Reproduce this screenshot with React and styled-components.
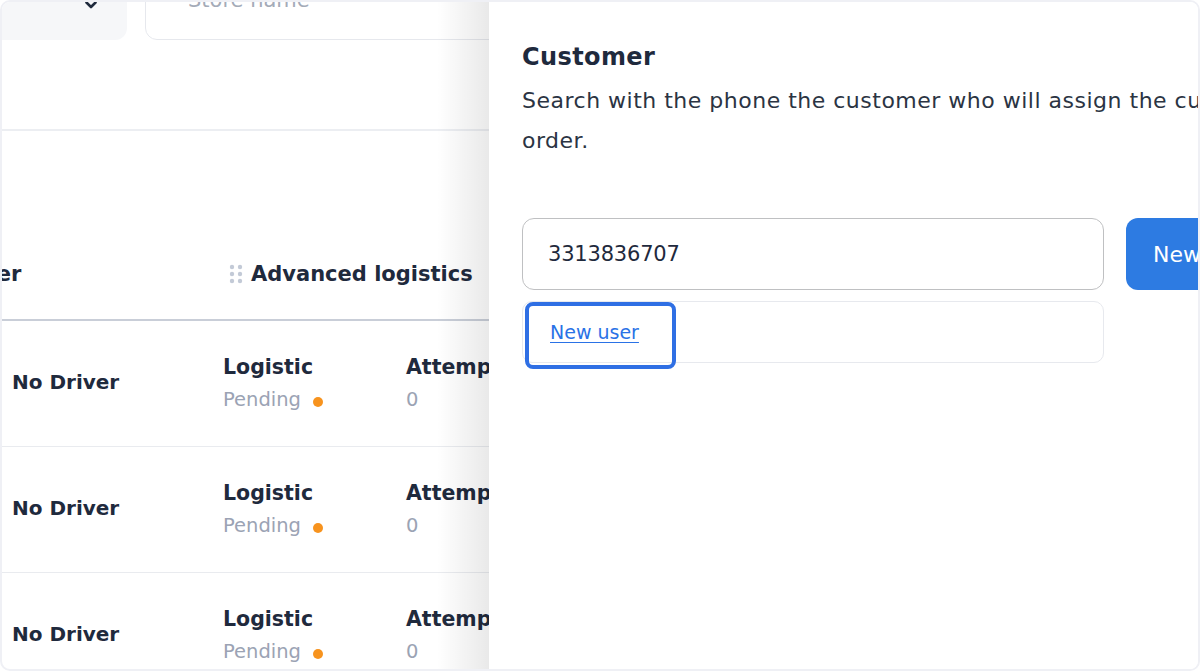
import React from "react";
import styled, { createGlobalStyle } from "styled-components";

const GlobalStyle = createGlobalStyle`
  html, body {
    margin: 0;
    padding: 0;
    background: #ffffff;
    overflow: hidden;
  }
  * {
    box-sizing: border-box;
  }
  body {
    font-family: "DejaVu Sans", "Noto Sans", sans-serif;
    color: #1f2a3d;
  }
`;

const rows = [
  { driver: "No Driver", status: "Pending", attempts: 0 },
  { driver: "No Driver", status: "Pending", attempts: 0 },
  { driver: "No Driver", status: "Pending", attempts: 0 },
];

const DragDots = () => (
  <svg width="14" height="20" viewBox="0 0 14 20" fill="#c3cad7">
    <circle cx="3" cy="3" r="2.2" />
    <circle cx="11" cy="3" r="2.2" />
    <circle cx="3" cy="10" r="2.2" />
    <circle cx="11" cy="10" r="2.2" />
    <circle cx="3" cy="17" r="2.2" />
    <circle cx="11" cy="17" r="2.2" />
  </svg>
);

const Chevron = () => (
  <svg width="12" height="8" viewBox="0 0 12 8">
    <path d="M1.5 1.5 L6 6 L10.5 1.5" stroke="#1f2a3d" strokeWidth="2.6" fill="none" strokeLinecap="round" strokeLinejoin="round" />
  </svg>
);

const Orders = () => (
  <Page>
    <PageInner>
      <Filters>
        <Select>
          <Chevron />
        </Select>
        <StoreInput>Store name</StoreInput>
      </Filters>
      <Divider />
      <Table>
        <HeadCell pad={46}>
          <DragDots />
          <span>Driver</span>
        </HeadCell>
        <HeadCell pad={6}>
          <DragDots />
          <span>Advanced logistics</span>
        </HeadCell>
        {rows.map((row, i) => (
          <React.Fragment key={i}>
            <DriverCell>{row.driver}</DriverCell>
            <LogisticsCell>
              <Stat>
                <StatTitle>Logistic</StatTitle>
                <StatValue>
                  {row.status}
                  <Dot />
                </StatValue>
              </Stat>
              <Stat>
                <StatTitle>Attempts</StatTitle>
                <StatValue>{row.attempts}</StatValue>
              </Stat>
            </LogisticsCell>
          </React.Fragment>
        ))}
      </Table>
    </PageInner>
  </Page>
);

const CustomerDrawer = () => (
  <Drawer>
    <DrawerBody>
      <Title>Customer</Title>
      <Description>
        Search with the phone the customer who will assign the current order.
      </Description>
      <SearchRow>
        <PhoneField>
          <PhoneInput defaultValue="3313836707" />
          <Suggestions>
            <Suggestion href="#">New user</Suggestion>
          </Suggestions>
        </PhoneField>
        <PrimaryButton>New customer</PrimaryButton>
      </SearchRow>
    </DrawerBody>
  </Drawer>
);

export default function App() {
  return (
    <>
      <GlobalStyle />
      <Frame>
        <Orders />
        <CustomerDrawer />
      </Frame>
    </>
  );
}

const Frame = styled.div`
  width: 1200px;
  height: 671px;
  border: 2px solid #eff0f5;
  border-radius: 10px;
  overflow: hidden;
  display: flex;
  background: #ffffff;
`;

const Page = styled.div`
  position: relative;
  width: 487px;
  flex-shrink: 0;
  overflow: hidden;

  &::after {
    content: "";
    position: absolute;
    top: 0;
    right: 0;
    bottom: 0;
    width: 52px;
    background: linear-gradient(to right, rgba(0, 0, 0, 0), rgba(0, 0, 0, 0.085));
    pointer-events: none;
  }
`;

const PageInner = styled.div`
  width: 900px;
  margin-left: -122px;
`;

const Filters = styled.div`
  display: flex;
  gap: 18px;
  margin-top: -46px;
  height: 84px;
`;

const Select = styled.div`
  width: 247px;
  background: #f6f7f9;
  border-radius: 12px;
  display: flex;
  justify-content: flex-end;
  align-items: flex-start;
  padding: 45px 30px 0 0;
`;

const StoreInput = styled.div`
  flex: 1;
  border: 1.5px solid #e6e8ed;
  border-radius: 12px;
  padding: 28px 0 0 42px;
  font-size: 21px;
  color: #a4abb8;
  line-height: 30px;
`;

const Divider = styled.div`
  height: 2px;
  background: #eceef2;
  margin-top: 89px;
`;

const Table = styled.div`
  display: grid;
  grid-template-columns: 343px 1fr;
  margin-top: 100px;
`;

const HeadCell = styled.div`
  display: flex;
  align-items: center;
  gap: 8px;
  height: 90px;
  padding: 0 0 2px ${(p) => p.pad}px;
  border-bottom: 2px solid #c9ced8;
  font-size: 21px;
  font-weight: 700;
  color: #1f2a3d;
`;

const DriverCell = styled.div`
  height: 126px;
  display: flex;
  align-items: center;
  padding: 0 0 3px 132px;
  border-bottom: 1px solid #e9ebef;
  font-size: 20px;
  font-weight: 700;
  color: #1f2a3d;
`;

const LogisticsCell = styled.div`
  height: 126px;
  display: flex;
  align-items: center;
  border-bottom: 1px solid #e9ebef;
`;

const Stat = styled.div`
  width: 183px;
  display: flex;
  flex-direction: column;
  gap: 5px;
`;

const StatTitle = styled.div`
  font-size: 20.5px;
  font-weight: 700;
  line-height: 28px;
  color: #1f2a3d;
`;

const StatValue = styled.div`
  display: flex;
  align-items: center;
  gap: 12px;
  font-size: 19.5px;
  line-height: 28px;
  color: #9ba3b4;
`;

const Dot = styled.span`
  width: 10px;
  height: 10px;
  border-radius: 50%;
  background: #f7931e;
  margin-top: 3px;
`;

const Drawer = styled.div`
  flex: 1;
  overflow: hidden;
  background: #ffffff;
`;

const DrawerBody = styled.div`
  width: 880px;
  padding: 37px 0 0 33px;
`;

const Title = styled.h2`
  margin: 0;
  font-size: 24px;
  font-weight: 700;
  line-height: 36px;
  color: #1f2a3d;
  letter-spacing: 0.4px;
`;

const Description = styled.p`
  margin: 6px 0 0;
  width: 765px;
  font-size: 22px;
  line-height: 40px;
  color: #2b3443;
  letter-spacing: 0.5px;
`;

const SearchRow = styled.div`
  display: flex;
  align-items: flex-start;
  gap: 22px;
  margin-top: 57px;
`;

const PhoneField = styled.div`
  width: 582px;
  flex-shrink: 0;
  display: flex;
  flex-direction: column;
  gap: 11px;
`;

const PhoneInput = styled.input`
  height: 72px;
  border: 1.5px solid #bfc0c2;
  border-radius: 12px;
  padding: 0 25px;
  font-family: "DejaVu Sans", "Noto Sans", sans-serif;
  font-size: 21px;
  color: #1f2a3d;
  letter-spacing: -0.2px;
  outline: none;
`;

const Suggestions = styled.div`
  height: 62px;
  border: 1px solid #e7e9ee;
  border-radius: 10px;
  padding: 0 0 0 2px;
`;

const Suggestion = styled.a`
  display: flex;
  align-items: center;
  width: 151px;
  height: 67px;
  padding: 0 0 8px 21px;
  border: 4px solid #2f6fe4;
  border-radius: 8px;
  font-size: 19px;
  color: #2a72e6;
  text-decoration: underline;
  text-underline-offset: 3px;
`;

const PrimaryButton = styled.button`
  flex-shrink: 0;
  height: 72px;
  padding: 0 27px;
  border: none;
  border-radius: 12px;
  background: #2d7be2;
  color: #ffffff;
  font-family: "DejaVu Sans", "Noto Sans", sans-serif;
  font-size: 22px;
  white-space: nowrap;
`;
